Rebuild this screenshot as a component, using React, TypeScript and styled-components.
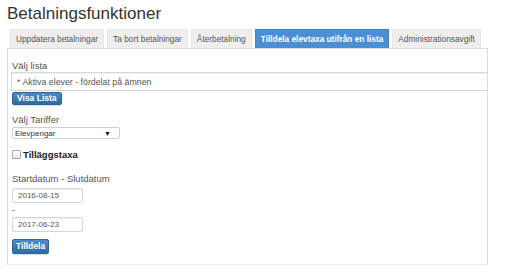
import React from "react";
import styled, { createGlobalStyle } from "styled-components";

const GlobalStyle = createGlobalStyle`
  html, body {
    margin: 0;
    padding: 0;
    background: #fff;
    font-family: "Liberation Sans", Arial, sans-serif;
  }
`;

const Page = styled.div`
  padding: 0 19px 0 7px;
  width: 481px;
`;

const Title = styled.h1`
  margin: 0;
  padding-top: 3px;
  font-size: 17px;
  line-height: 22px;
  font-weight: normal;
  color: #333;
`;

const Tabs = styled.div`
  display: flex;
  gap: 3px;
  margin: 4px 0 0 3px;
  height: 19px;
  position: relative;
  z-index: 1;
`;

interface TabProps {
  active?: boolean;
}

const Tab = styled.div<TabProps>`
  display: flex;
  align-items: center;
  padding: 0 5px;
  font-size: 8.3px;
  font-weight: ${({ active }) => (active ? "bold" : "normal")};
  color: ${({ active }) => (active ? "#fff" : "#555")};
  background: ${({ active }) => (active ? "#4a8fd5" : "#eeeeee")};
  border: 1px solid ${({ active }) => (active ? "#3f82c8" : "#e6e6e6")};
  border-bottom: none;
  white-space: nowrap;
`;

const Panel = styled.div`
  border: 1px solid #dcdcdc;
  border-bottom-color: #ececec;
  padding: 11px 0 10px 4px;
`;

const Label = styled.div`
  font-size: 9.5px;
  line-height: 12px;
  color: #555;
`;

const ListInput = styled.div`
  height: 17px;
  margin-left: -1px;
  border: 1px solid #d6d6d6;
  border-right: none;
  box-shadow: inset 0 1px 1px rgba(0, 0, 0, 0.06);
  display: flex;
  align-items: center;
  padding-left: 5px;
  font-size: 8.8px;
  color: #555;
`;

interface ButtonProps {
  tall?: boolean;
}

const Button = styled.button<ButtonProps>`
  display: block;
  font-family: inherit;
  font-size: 8.5px;
  font-weight: bold;
  color: #fff;
  line-height: 11px;
  padding: ${({ tall }) => (tall ? "1px 3px" : "0 4px")};
  height: ${({ tall }) => (tall ? "15px" : "13px")};
  border: 1px solid #2b669a;
  border-radius: 2px;
  background: linear-gradient(#4a8bca, #2d6ca2);
  box-shadow: 0 1px 1px rgba(0, 0, 0, 0.15);
`;

const Select = styled.div`
  height: 10px;
  margin-top: 1px;
  border: 1px solid #cfcfcf;
  border-radius: 2px;
  display: flex;
  justify-content: space-between;
  align-items: center;
  padding: 0 8px 0 2px;
  font-size: 8px;
  color: #333;
  box-sizing: content-box;
  width: 96px;
`;

const Arrow = styled.span`
  font-size: 7px;
  color: #111;
`;

const CheckRow = styled.label`
  display: flex;
  align-items: center;
  gap: 2px;
  margin-top: 10px;
  font-size: 9.5px;
  font-weight: bold;
  color: #222;
`;

const Check = styled.span`
  width: 7px;
  height: 7px;
  border: 1px solid #aaa;
  border-radius: 1px;
  background: linear-gradient(#fff, #e8e8e8);
`;

const DateInput = styled.div`
  width: 64px;
  height: 13px;
  border: 1px solid #d6d6d6;
  border-radius: 2px;
  box-shadow: inset 0 1px 1px rgba(0, 0, 0, 0.06);
  display: flex;
  align-items: center;
  padding-left: 5px;
  font-size: 8px;
  color: #555;
`;

const Dash = styled.div`
  font-size: 9px;
  line-height: 14px;
  color: #555;
`;

const Spacer = styled.div<{ h: number }>`
  height: ${({ h }) => h}px;
`;

export default function App() {
  return (
    <>
      <GlobalStyle />
      <Page>
        <Title>Betalningsfunktioner</Title>
        <Tabs>
          <Tab>Uppdatera betalningar</Tab>
          <Tab>Ta bort betalningar</Tab>
          <Tab>Återbetalning</Tab>
          <Tab active>Tilldela elevtaxa utifrån en lista</Tab>
          <Tab>Administrationsavgift</Tab>
        </Tabs>
        <Panel>
          <Label>Välj lista</Label>
          <ListInput>* Aktiva elever - fördelat på ämnen</ListInput>
          <Spacer h={1} />
          <Button>Visa Lista</Button>
          <Spacer h={9} />
          <Label>Välj Tariffer</Label>
          <Select>
            <span>Elevpengar</span>
            <Arrow>▼</Arrow>
          </Select>
          <CheckRow>
            <Check />
            Tilläggstaxa
          </CheckRow>
          <Spacer h={13} />
          <Label>Startdatum - Slutdatum</Label>
          <Spacer h={3} />
          <DateInput>2016-08-15</DateInput>
          <Dash>-</Dash>
          <DateInput>2017-06-23</DateInput>
          <Spacer h={7} />
          <Button tall>Tilldela</Button>
        </Panel>
      </Page>
    </>
  );
}
